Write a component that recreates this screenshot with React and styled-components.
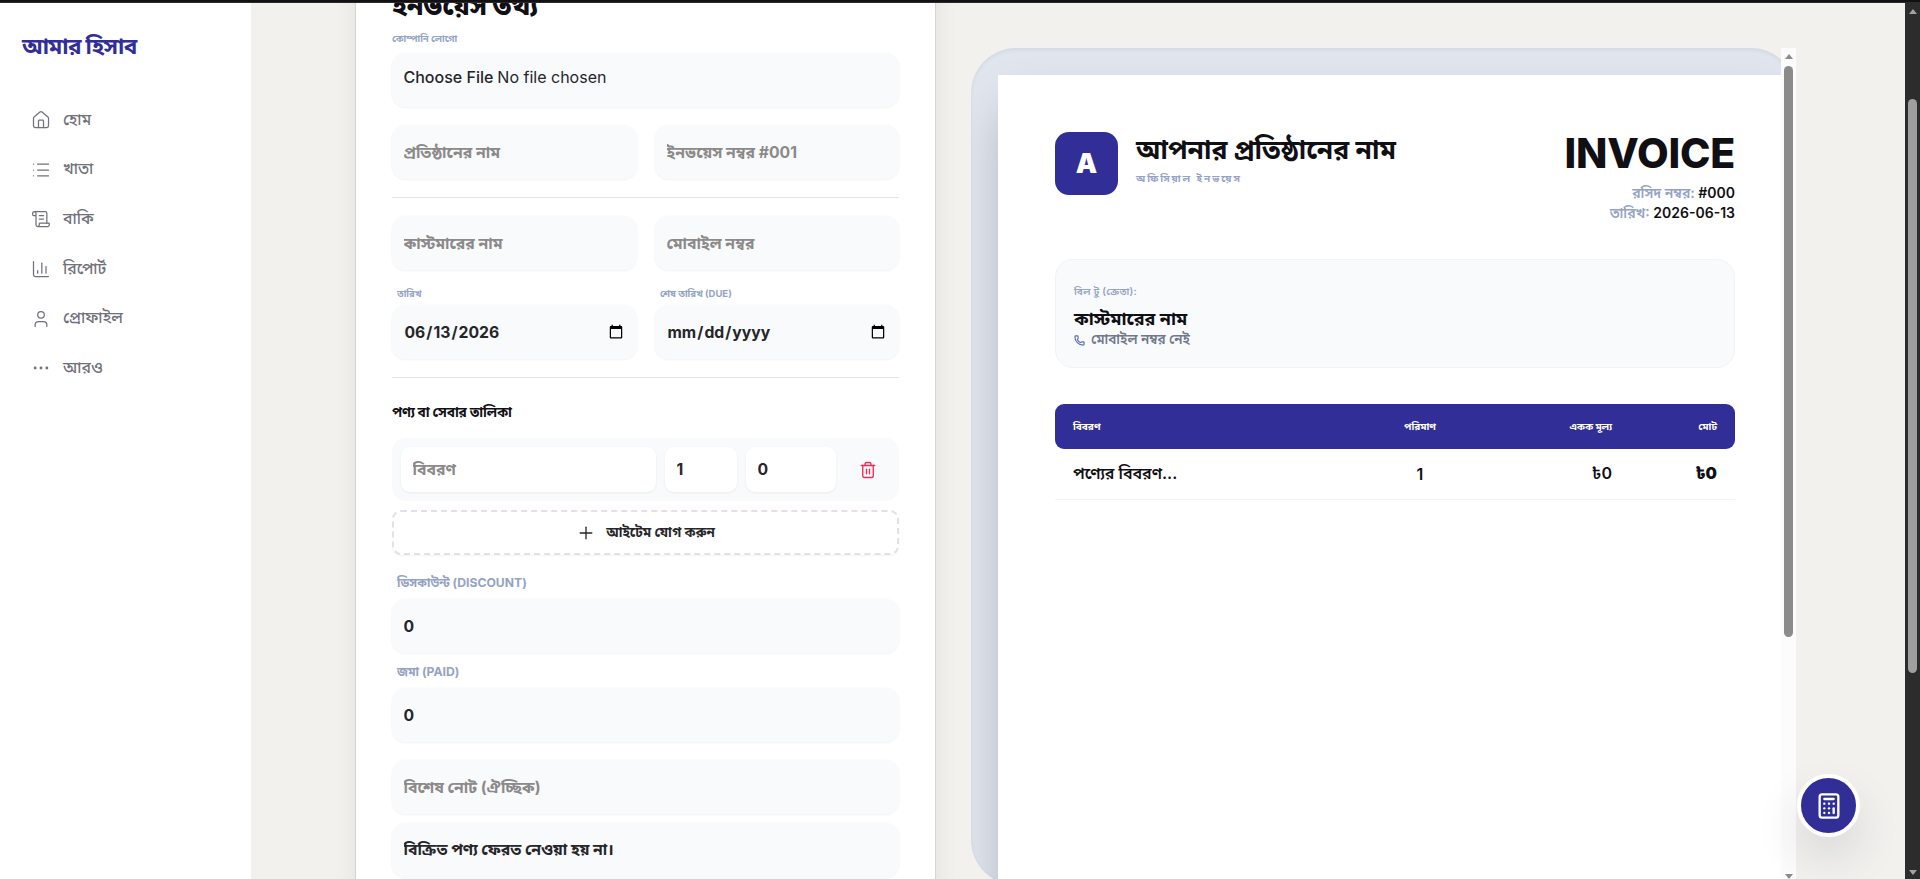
import React from "react";
import styled, { createGlobalStyle } from "styled-components";
import { House, List, ScrollText, ChartColumn, User, Ellipsis, Trash2, Plus, Phone, Calculator } from "lucide-react";

const Global = createGlobalStyle`
  *, *::before, *::after { box-sizing: border-box; }
  html, body { margin: 0; padding: 0; }
  body {
    height: 879px;
    overflow: hidden;
    background: #f2f1ee;
    font-family: Inter, "Noto Sans Bengali", "Noto Sans", sans-serif;
    color: #101014;
  }
  input, button { font: inherit; color: inherit; margin: 0; }
`;

const Screen = styled.div`
  height: 879px;
  display: flex;
  flex-direction: column;
  overflow: hidden;
`;
const TopEdge = styled.div`
  flex: none;
  height: 3px;
  background: #111114;
  border-bottom: 1px solid #2b2b2b;
`;
const Shell = styled.div`
  flex: 1;
  min-height: 0;
  display: flex;
`;

const Sidebar = styled.aside`
  width: 251px;
  flex: none;
  background: #fff;
  padding: 23px 14px 0 22px;
`;
const Brand = styled.div`
  height: 40px;
  line-height: 40px;
  font-size: 22.5px;
  font-weight: 700;
  letter-spacing: -0.7px;
  color: #312e98;
`;
const Nav = styled.nav`
  display: flex;
  flex-direction: column;
  margin-top: 29px;
`;
const NavItem = styled.a`
  display: flex;
  align-items: center;
  gap: 12px;
  height: 49.6px;
  padding: 1px 0 0 9px;
  font-size: 15.75px;
  font-weight: 500;
  color: #71717a;
`;

const Main = styled.main`
  flex: 1;
  min-width: 0;
  display: flex;
  align-items: flex-start;
  padding-left: 104px;
  gap: 35px;
  overflow: hidden;
`;
const FormCard = styled.section`
  width: 581px;
  flex: none;
  height: 1100px;
  margin-top: -63px;
  padding: 36px;
  background: #fff;
  border: 1px solid #d4d4d0;
  box-shadow: 0 0 22px rgba(0, 0, 0, 0.07);
`;
const FormTitle = styled.h2`
  margin: 0;
  height: 48px;
  line-height: 48px;
  padding-top: 5px;
  font-size: 27px;
  font-weight: 800;
  letter-spacing: -0.3px;
`;
const Label = styled.label`
  display: block;
  height: ${(p) => p.$h}px;
  line-height: ${(p) => p.$line || p.$h}px;
  margin-left: ${(p) => p.$indent || 0}px;
  font-size: ${(p) => p.$size}px;
  font-weight: 700;
  color: #94a3c4;
`;
const Field = styled.input`
  display: block;
  width: 100%;
  height: 54px;
  min-width: 0;
  padding: 0 11.5px;
  border: 0;
  border-radius: 14px;
  outline: none;
  background: #f8fafc;
  box-shadow: 0 0 0 1px rgba(248, 250, 252, 0.6), 0 1px 2px rgba(0, 0, 0, 0.07);
  font-size: 15.75px;
  font-weight: 700;
  color: #262629;
  &::placeholder { color: #8c8989; opacity: 1; }
`;
const FileField = styled(Field)`
  padding: 14px 11.5px 12px;
  font-size: 16px;
  font-weight: 400;
  &::file-selector-button {
    border: 0;
    padding: 0;
    margin: 0 4px 0 0;
    background: transparent;
    font: inherit;
    font-weight: 500;
    color: inherit;
  }
`;
const ItemField = styled(Field)`
  width: ${(p) => p.$w}px;
  height: 45px;
  background: #fff;
  border-radius: 9px;
  box-shadow: 0 1px 3px rgba(0, 0, 0, 0.06);
`;
const Pair = styled.div`
  display: grid;
  grid-template-columns: 245px 244px;
  column-gap: 18px;
  margin-top: ${(p) => p.$top}px;
`;
const Rule = styled.div`
  height: 1px;
  margin-top: 18px;
  background: #e4e4e5;
`;
const SectionTitle = styled.h3`
  margin: 20px 0 12px;
  height: 28px;
  line-height: 28px;
  font-size: 13.7px;
  font-weight: 700;
  letter-spacing: -0.2px;
`;
const ItemRow = styled.div`
  display: flex;
  align-items: center;
  gap: 9px;
  height: 63px;
  padding: 0 9px;
  border-radius: 14px;
  background: #f8fafc;
`;
const DeleteButton = styled.button`
  flex: 1;
  display: flex;
  justify-content: center;
  border: 0;
  padding: 1px 0 0;
  background: none;
  color: #ef2b56;
`;
const AddButton = styled.button`
  display: flex;
  align-items: center;
  justify-content: center;
  gap: 10px;
  width: 100%;
  height: 45px;
  margin-top: 9px;
  padding-top: 2px;
  border: 2px dashed #e2e2e4;
  border-radius: 9px;
  background: #fff;
  box-shadow: 0 1px 2px rgba(0, 0, 0, 0.05);
  font-size: 13.5px;
  font-weight: 700;
  color: #262629;
`;
const Stack = styled.div`
  margin-top: ${(p) => p.$top}px;
`;

const PreviewFrame = styled.section`
  flex: none;
  display: flex;
  width: 825px;
  height: 837px;
  margin-top: 45px;
  border-radius: 45px;
  background: #e0e5ee;
  box-shadow: inset 0 2px 4px rgba(0, 0, 0, 0.06);
`;
const PreviewDesk = styled.div`
  width: 810px;
  flex: none;
  padding: 27px 0 0 27px;
  overflow: hidden;
  border-radius: 45px 0 0 45px;
`;
const Paper = styled.article`
  width: 794px;
  height: 1120px;
  padding: 57px;
  background: #fff;
  box-shadow: 0 25px 50px -12px rgba(0, 0, 0, 0.28);
`;
const PaperHead = styled.header`
  display: flex;
  height: 127px;
`;
const Mark = styled.div`
  width: 63px;
  height: 63px;
  flex: none;
  display: flex;
  align-items: center;
  justify-content: center;
  border-radius: 14px;
  background: #312e98;
  color: #fff;
  font-size: 27px;
  font-weight: 900;
`;
const Company = styled.div`
  flex: 1;
  margin-left: 18px;
`;
const CompanyName = styled.div`
  height: 36px;
  line-height: 34px;
  font-size: 26.5px;
  font-weight: 700;
  white-space: nowrap;
`;
const CompanyTag = styled.div`
  height: 20px;
  line-height: 20px;
  font-size: 10px;
  font-weight: 700;
  letter-spacing: 2px;
  color: #94a3c4;
`;
const Meta = styled.div`
  text-align: right;
  font-size: 14px;
  font-weight: 600;
  line-height: 20px;
`;
const InvoiceWord = styled.div`
  height: 51px;
  line-height: 43px;
  font-size: 41px;
  font-weight: 800;
  letter-spacing: -0.2px;
`;
const Muted = styled.span`
  color: #94a3c4;
`;
const BillTo = styled.div`
  height: 109px;
  padding: 21px 18px;
  border: 1px solid #f1f3f6;
  border-radius: 18px;
  background: #f8fafc;
`;
const BillLabel = styled.div`
  height: 20px;
  line-height: 20px;
  font-size: 10px;
  font-weight: 600;
  letter-spacing: 0.3px;
  color: #94a3c4;
`;
const BillName = styled.div`
  height: 25px;
  line-height: 25px;
  margin-top: 5px;
  font-size: 18px;
  font-weight: 700;
`;
const BillPhone = styled.div`
  display: flex;
  align-items: center;
  gap: 6px;
  height: 18px;
  font-size: 13.5px;
  font-weight: 600;
  color: #71788a;
  svg { color: #5b6bb0; }
`;
const TableRow = styled.div`
  display: grid;
  grid-template-columns: 277px 140px 122px 105px;
  align-items: center;
  padding: 0 18px;
  height: 51px;
  font-size: 16px;
  font-weight: 600;
  border-bottom: 1px solid #f3f4f6;
`;
const TableHead = styled(TableRow)`
  height: 45px;
  margin-top: 36px;
  border: 0;
  border-radius: 9px;
  background: #312e98;
  color: #fff;
  font-size: 10px;
  font-weight: 700;
`;
const Cell = styled.span`
  text-align: ${(p) => p.$align || "left"};
  font-weight: ${(p) => (p.$strong ? 900 : "inherit")};
  white-space: nowrap;
`;

const Track = styled.div`
  width: 15px;
  flex: none;
  display: flex;
  flex-direction: column;
  align-items: center;
  background: ${(p) => (p.$dark ? "#2c2c2c" : "#fcfcfc")};
`;
const Arrow = styled.i`
  flex: none;
  border: 4.5px solid transparent;
  border-top-width: 0;
  border-bottom: 5px solid ${(p) => (p.$dark ? "#a3a3a3" : "#8b8b8b")};
  margin: ${(p) => p.$m};
  transform: ${(p) => (p.$down ? "rotate(180deg)" : "none")};
`;
const Thumb = styled.div`
  width: 9px;
  height: ${(p) => p.$h}px;
  flex: none;
  border-radius: 5px;
  background: ${(p) => (p.$dark ? "#9f9f9f" : "#8b8b8b")};
`;
const Fab = styled.button`
  position: absolute;
  left: 1797px;
  top: 774px;
  width: 63px;
  height: 63px;
  display: flex;
  align-items: center;
  justify-content: center;
  padding: 0;
  border: 4px solid #fff;
  border-radius: 50%;
  background: #312e98;
  color: #fff;
  box-shadow: 0 22px 45px rgba(30, 41, 59, 0.12);
`;

const NAV = [
  [House, "হোম"],
  [List, "খাতা"],
  [ScrollText, "বাকি"],
  [ChartColumn, "রিপোর্ট"],
  [User, "প্রোফাইল"],
  [Ellipsis, "আরও"],
];

export default function App() {
  return (
    <Screen>
      <Global />
      <TopEdge />
      <Shell>
        <Sidebar>
          <Brand>আমার হিসাব</Brand>
          <Nav>
            {NAV.map(([Icon, name]) => (
              <NavItem key={name}>
                <Icon size={20} strokeWidth={1.5} />
                {name}
              </NavItem>
            ))}
          </Nav>
        </Sidebar>
        <Main>
          <FormCard>
            <FormTitle>ইনভয়েস তথ্য</FormTitle>
            <Label $h={28} $line={27} $size={9.5}>কোম্পানি লোগো</Label>
            <FileField type="file" />
            <Pair $top={18}>
              <Field placeholder="প্রতিষ্ঠানের নাম" />
              <Field placeholder="ইনভয়েস নম্বর #001" />
            </Pair>
            <Rule />
            <Pair $top={18}>
              <Field placeholder="কাস্টমারের নাম" />
              <Field placeholder="মোবাইল নম্বর" />
            </Pair>
            <Pair $top={12}>
              <Label $h={23} $line={24} $size={9.5} $indent={5}>তারিখ</Label>
              <Label $h={23} $line={24} $size={9.5} $indent={5}>শেষ তারিখ (DUE)</Label>
              <Field type="date" defaultValue="2026-06-13" />
              <Field type="date" />
            </Pair>
            <Rule />
            <SectionTitle>পণ্য বা সেবার তালিকা</SectionTitle>
            <ItemRow>
              <ItemField $w={255} placeholder="বিবরণ" />
              <ItemField $w={72} defaultValue="1" />
              <ItemField $w={90} defaultValue="0" />
              <DeleteButton><Trash2 size={18} strokeWidth={1.8} /></DeleteButton>
            </ItemRow>
            <AddButton><Plus size={20} strokeWidth={1.6} />আইটেম যোগ করুন</AddButton>
            <Stack $top={13}>
              <Label $h={31} $line={29} $size={12.2} $indent={5}>ডিসকাউন্ট (DISCOUNT)</Label>
              <Field defaultValue="0" />
            </Stack>
            <Stack $top={4}>
              <Label $h={31} $line={29} $size={12.2} $indent={5}>জমা (PAID)</Label>
              <Field defaultValue="0" />
            </Stack>
            <Stack $top={18}><Field placeholder="বিশেষ নোট (ঐচ্ছিক)" /></Stack>
            <Stack $top={9}><Field defaultValue="বিক্রিত পণ্য ফেরত নেওয়া হয় না।" /></Stack>
          </FormCard>
          <PreviewFrame>
            <PreviewDesk>
              <Paper>
                <PaperHead>
                  <Mark>A</Mark>
                  <Company>
                    <CompanyName>আপনার প্রতিষ্ঠানের নাম</CompanyName>
                    <CompanyTag>অফিসিয়াল ইনভয়েস</CompanyTag>
                  </Company>
                  <Meta>
                    <InvoiceWord>INVOICE</InvoiceWord>
                    <div><Muted>রসিদ নম্বর:</Muted> #000</div>
                    <div><Muted>তারিখ:</Muted> 2026-06-13</div>
                  </Meta>
                </PaperHead>
                <BillTo>
                  <BillLabel>বিল টু (ক্রেতা):</BillLabel>
                  <BillName>কাস্টমারের নাম</BillName>
                  <BillPhone><Phone size={11} strokeWidth={2.5} />মোবাইল নম্বর নেই</BillPhone>
                </BillTo>
                <TableHead>
                  <Cell>বিবরণ</Cell>
                  <Cell $align="center">পরিমাণ</Cell>
                  <Cell $align="right">একক মূল্য</Cell>
                  <Cell $align="right">মোট</Cell>
                </TableHead>
                <TableRow>
                  <Cell>পণ্যের বিবরণ...</Cell>
                  <Cell $align="center">1</Cell>
                  <Cell $align="right">৳0</Cell>
                  <Cell $align="right" $strong>৳0</Cell>
                </TableRow>
              </Paper>
            </PreviewDesk>
            <Track>
              <Arrow $m="6px 0 7px" />
              <Thumb $h={571} />
              <Arrow $down $m="auto 0 6px" />
            </Track>
          </PreviewFrame>
        </Main>
        <Track $dark>
          <Arrow $dark $m="6px 0 85px" />
          <Thumb $dark $h={574} />
          <Arrow $dark $down $m="auto 0 4px" />
        </Track>
      </Shell>
      <Fab><Calculator size={28} strokeWidth={2} /></Fab>
    </Screen>
  );
}
